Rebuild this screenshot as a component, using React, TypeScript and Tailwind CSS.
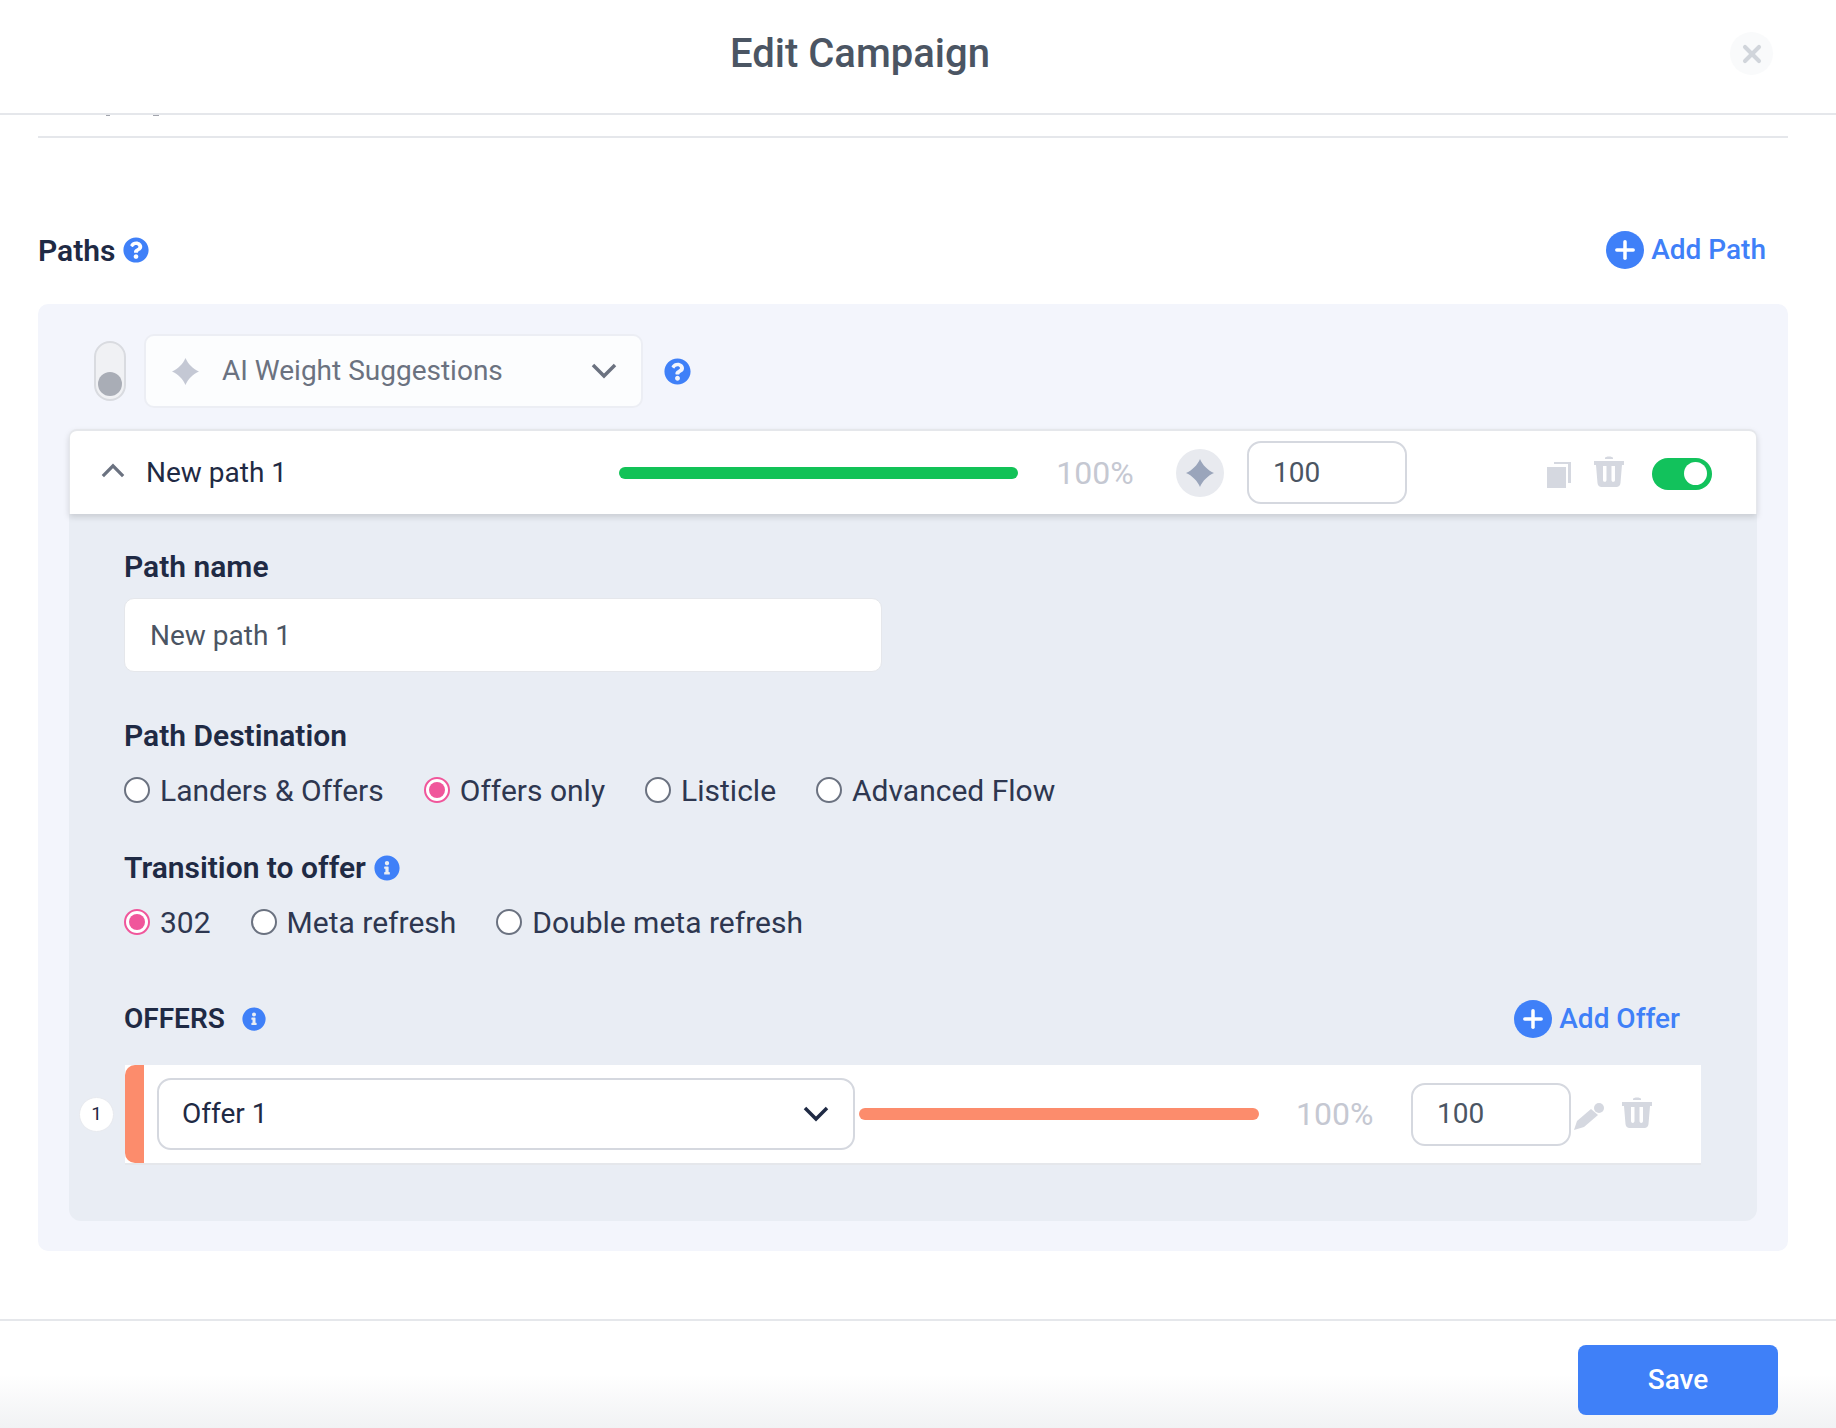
import { FaInfoCircle, FaQuestionCircle } from "react-icons/fa";
import { Plus, X } from "lucide-react";

const font = { fontFamily: "Roboto, sans-serif" };

function Sparkle({ className }: { className?: string }) {
  return (
    <svg viewBox="0 0 24 24" className={className} fill="currentColor">
      <path d="M12 0c2 5 7 10 12 12-5 2-10 7-12 12-2-5-7-10-12-12 5-2 10-7 12-12z" />
    </svg>
  );
}

function Chevron({ className }: { className?: string }) {
  return (
    <svg viewBox="0 0 26 16" className={className} fill="none" stroke="currentColor" strokeWidth={3.5}>
      <path d="M2 2l11 11L24 2" />
    </svg>
  );
}

function TrashIcon({ className }: { className?: string }) {
  return (
    <svg viewBox="0 0 30 32" className={className} fill="currentColor">
      <path d="M11 3c0-2 8-2 8 0v1h-8z" />
      <path fillRule="evenodd" d="M0 6h30v4h-2l-1.500 18c-.2 2.500-2 4-4 4h-15c-2 0-3.800-1.500-4-4L2 10H0zM9 11v14c0 2.500 3.500 2.500 3.500 0V11zm8.500 0v14c0 2.500 3.500 2.500 3.500 0V11z" />
    </svg>
  );
}

function CopyIcon({ className }: { className?: string }) {
  return (
    <svg viewBox="0 0 24 26" className={className} fill="currentColor">
      <path d="M7 0h17v21h-3V2H7z" />
      <path d="M0 5h19v21H0z" />
    </svg>
  );
}

function PencilIcon({ className }: { className?: string }) {
  return (
    <svg viewBox="0 0 30 27" className={className} fill="currentColor">
      <path d="M0 27l3-9L17 6l7 6-14 12z" />
      <circle cx="25" cy="5" r="5" />
    </svg>
  );
}

function Radio({ label, checked }: { label: string; checked?: boolean }) {
  return (
    <label className="flex items-center gap-[10px] text-[30px] text-[#2e3750]">
      <span
        className={
          checked
            ? "flex size-[26px] items-center justify-center rounded-full border-2 border-[#f0569b] bg-white"
            : "size-[26px] rounded-full border-2 border-[#6b7280] bg-white"
        }
      >
        {checked ? <span className="size-[16px] rounded-full bg-[#f0569b]" /> : null}
      </span>
      {label}
    </label>
  );
}

function AddButton({ label }: { label: string }) {
  return (
    <button className="flex items-center gap-[7px] text-[28px] font-medium text-[#3f80f8]">
      <span className="flex size-[38px] items-center justify-center rounded-full bg-[#3f80f8] text-white">
        <Plus className="size-[28px]" strokeWidth={3} />
      </span>
      {label}
    </button>
  );
}

function Bar({ color }: { color: string }) {
  return <div className={`h-[12px] w-[400px] rounded-full ${color}`} />;
}

function WeightInput() {
  return (
    <div className="flex h-[63px] w-[160px] items-center rounded-[14px] border-2 border-[#d5d8df] bg-white pl-[24px] text-[28px] text-[#4b5563]">
      100
    </div>
  );
}

export default function App() {
  return (
    <div className="flex h-[1428px] w-full flex-col overflow-hidden bg-white" style={font}>
      <header className="flex h-[115px] shrink-0 items-center border-b-2 border-[#e5e7eb] pb-[6px]">
        <h1 className="flex-1 pr-[10px] text-center text-[40px] font-medium text-[#4b5563]">Edit Campaign</h1>
        <button className="mr-[63px] flex size-[43px] items-center justify-center rounded-full bg-[#f9fafb] text-[#d1d5db]">
          <X className="size-[28px]" strokeWidth={3.5} />
        </button>
      </header>

      <main className="flex-1 pl-[38px] pr-[48px]">
        {/* bottom of the row scrolled away under the header */}
        <div className="flex h-[1px] gap-[43px] pl-[68px]">
          <span className="h-[1px] w-[4px] bg-[#a3a6ae]" />
          <span className="h-[1px] w-[6px] bg-[#a3a6ae]" />
        </div>
        <div className="mt-[20px] h-[2px] bg-[#e5e7eb]" />

        <div className="mt-[93px] flex h-[38px] items-center justify-between pr-[22px]">
          <div className="flex items-center gap-[8px]">
            <h2 className="text-[30px] font-semibold text-[#1f2a44]">Paths</h2>
            <FaQuestionCircle className="size-[26px] text-[#3f80f8]" />
          </div>
          <AddButton label="Add Path" />
        </div>

        <section className="mt-[35px] rounded-[10px] bg-[#f3f5fc] px-[31px] pb-[30px] pt-[30px]">
          <div className="flex items-center pl-[25px]">
            <div className="flex h-[60px] w-[32px] items-end justify-center rounded-full border-2 border-[#d9dbe0] bg-[#f0f1f4] pb-[3px]">
              <span className="size-[24px] rounded-full bg-[#a9adb6]" />
            </div>
            <div className="ml-[18px] flex h-[74px] w-[499px] items-center rounded-[10px] border-2 border-[#eceef4] bg-[#fcfdfe] pl-[26px] pr-[24px] text-[28px] text-[#6b7280]">
              <Sparkle className="size-[27px] text-[#c4c8d4]" />
              <span className="ml-[23px] flex-1">AI Weight Suggestions</span>
              <Chevron className="h-[16px] w-[26px] text-[#6b7280]" />
            </div>
            <FaQuestionCircle className="ml-[21px] size-[27px] text-[#3f80f8]" />
          </div>

          <div className="relative mt-[21px] flex h-[85px] items-center rounded-t-[8px] border-x border-t-2 border-[#e5e7eb] bg-white pl-[31px] pr-[44px] shadow-[0_3px_6px_rgba(0,0,0,0.14)]">
            <Chevron className="mb-[4px] h-[15px] w-[24px] rotate-180 text-[#6b7280]" />
            <span className="ml-[21px] w-[473px] text-[28px] text-[#1f2a44]">New path 1</span>
            <Bar color="bg-[#12c257]" />
            <span className="ml-[38px] w-[120px] text-[32px] text-[#c5c8d2]">100%</span>
            <span className="flex size-[48px] items-center justify-center rounded-full bg-[#e8eaef] text-[#9aa5bb]">
              <Sparkle className="size-[28px]" />
            </span>
            <div className="ml-[23px]">
              <WeightInput />
            </div>
            <CopyIcon className="ml-[140px] mt-[4px] h-[26px] w-[24px] text-[#d5d8e0]" />
            <TrashIcon className="mb-[4px] ml-[23px] h-[32px] w-[30px] text-[#d5d8e0]" />
            <span className="ml-[28px] mt-[2px] flex h-[32px] w-[60px] items-center justify-end rounded-full bg-[#12c25c] pr-[5px]">
              <span className="size-[23px] rounded-full bg-white" />
            </span>
          </div>

          <div className="rounded-b-[12px] bg-[#e9edf4] pb-[56px] pl-[55px] pr-[56px] pt-[35px]">
            <h3 className="text-[30px] font-semibold leading-[36px] text-[#1f2a44]">Path name</h3>
            <div className="mt-[13px] flex h-[74px] w-[758px] items-center rounded-[10px] border border-[#e5e7eb] bg-white pl-[25px] pt-[2px] text-[28px] text-[#4b5563]">
              New path 1
            </div>

            <h3 className="mt-[46px] text-[30px] font-semibold leading-[36px] text-[#1f2a44]">Path Destination</h3>
            <div className="mt-[18px] flex h-[36px] items-center gap-[40px]">
              <Radio label="Landers & Offers" />
              <Radio label="Offers only" checked />
              <Radio label="Listicle" />
              <Radio label="Advanced Flow" />
            </div>

            <div className="mt-[42px] flex items-center gap-[8px]">
              <h3 className="text-[30px] font-semibold leading-[36px] text-[#1f2a44]">Transition to offer</h3>
              <FaInfoCircle className="size-[26px] text-[#3f80f8]" />
            </div>
            <div className="mt-[18px] flex h-[36px] items-center gap-[40px]">
              <Radio label="302" checked />
              <Radio label="Meta refresh" />
              <Radio label="Double meta refresh" />
            </div>

            <div className="mt-[60px] flex h-[38px] items-center justify-between pr-[21px]">
              <div className="flex items-center gap-[17px]">
                <h3 className="text-[28px] font-semibold text-[#1f2a44]">OFFERS</h3>
                <FaInfoCircle className="size-[24px] text-[#3f80f8]" />
              </div>
              <AddButton label="Add Offer" />
            </div>

            <div className="relative ml-[1px] mt-[27px] flex h-[100px] items-center border-b-2 border-[#e5e7eb] bg-white">
              <span className="absolute left-[-46px] top-[32px] flex size-[35px] items-center justify-center rounded-full border border-[#e8eaef] bg-white text-[19px] text-[#1f2a44]">
                1
              </span>
              <div className="h-full w-[19px] shrink-0 rounded-l-[10px] bg-[#fc8c6c]" />
              <div className="ml-[13px] flex h-[72px] w-[698px] items-center rounded-[14px] border-2 border-[#d5d8df] pl-[23px] pr-[24px] text-[28px] text-[#1f2a44]">
                <span className="flex-1">Offer 1</span>
                <Chevron className="h-[16px] w-[26px]" />
              </div>
              <div className="ml-[4px]">
                <Bar color="bg-[#fc8c6c]" />
              </div>
              <span className="ml-[37px] w-[115px] text-[32px] text-[#c5c8d2]">100%</span>
              <WeightInput />
              <PencilIcon className="ml-[3px] mt-[4px] h-[27px] w-[30px] text-[#d5d8e0]" />
              <TrashIcon className="mb-[4px] ml-[18px] h-[32px] w-[30px] text-[#d5d8e0]" />
            </div>
          </div>
        </section>
      </main>

      <footer className="flex h-[109px] shrink-0 items-start justify-end border-t-2 border-[#e5e7eb] bg-gradient-to-b from-white from-50% to-[#f1f2f4] pr-[58px] pt-[24px]">
        <button className="h-[70px] w-[200px] rounded-[8px] bg-[#3f80f8] text-[28px] font-medium text-white">Save</button>
      </footer>
    </div>
  );
}
